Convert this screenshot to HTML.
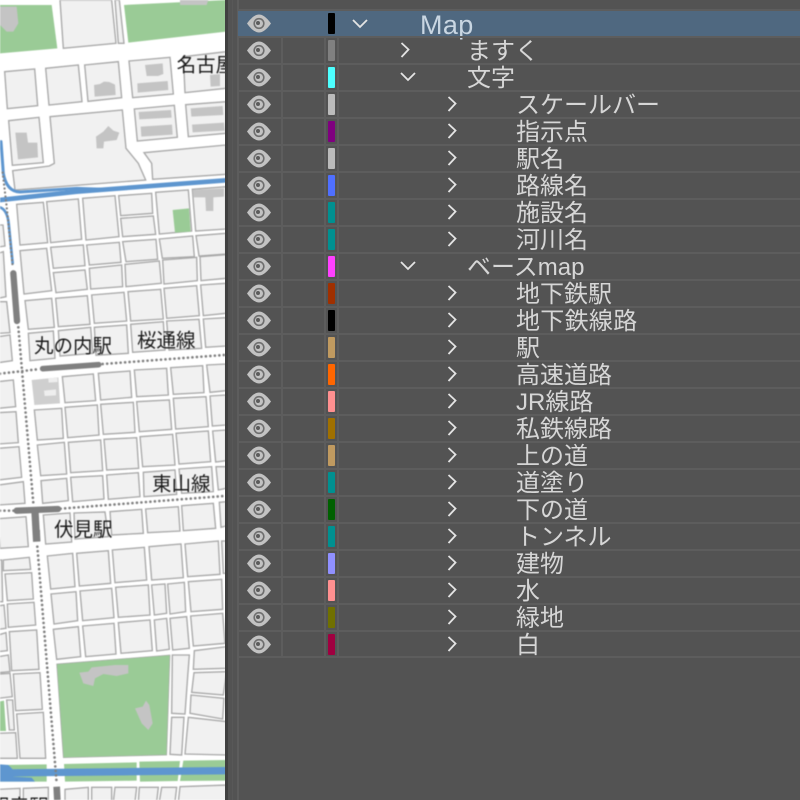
<!DOCTYPE html>
<html lang="ja"><head><meta charset="utf-8"><title>Map layers</title>
<style>
html,body{margin:0;padding:0;background:#535353}
body{width:800px;height:800px;position:relative;overflow:hidden;font-family:"Liberation Sans","Noto Sans CJK JP",sans-serif}
#map{position:absolute;left:0;top:0;width:226px;height:800px;overflow:hidden;background:#fff}
#map svg{position:absolute;left:0;top:0;filter:blur(.45px)}
#map .b polygon{fill:#f1f1f1;stroke:#a8a8a8;stroke-width:4}
#map text{font-family:"Liberation Sans","Noto Sans CJK JP",sans-serif;font-size:19.5px;fill:#1a1a1a}
#panel{position:absolute;left:226px;top:0;width:574px;height:800px;background:#535353}
.edge{position:absolute;left:-1px;top:0;width:3px;height:800px;background:#404040}
.v{position:absolute;background:#5d5d5d}
.h{position:absolute;left:11px;width:563px;height:2px;background:#5d5d5d}
.r{position:absolute;left:13px;width:561px;height:25px}
.r.s{left:12px;width:562px;background:#4f6880}
.r.s>*{margin-left:1px}
.e{position:absolute;left:8px;top:2px}
.c{position:absolute;left:89px;top:2px;width:7px;height:21px;border-radius:1px}
.t{position:absolute;top:-2px;font-size:24px;line-height:32px;color:#d6d6d6;white-space:nowrap}
.a{position:absolute;top:0}
</style></head><body>
<div id="map">
<svg width="226" height="800" viewBox="0 0 226 800">
<g transform="scale(.33333)">
<polygon points="0,15 155,15 172,145 0,160" fill="#9acb96"/>
<polygon points="372,15 678,0 678,95 385,128" fill="#9acb96"/>
<polygon points="0,20 50,20 55,70 40,95 20,95 0,75" fill="#c4c4c4"/>
<polygon points="540,0 625,0 620,15 540,15" fill="#c4c4c4"/>
<g class="b">
<polygon points="180,0 335,0 348,130 190,145"/>
<polygon points="345,0 358,0 372,130 355,130"/>
<polygon points="14,215 104,207 113,317 22,326"/>
<polygon points="137,205 235,195 246,305 147,315"/>
<polygon points="254,195 355,185 365,293 264,304"/>
<polygon points="387,183 510,172 520,282 398,293"/>
<polygon points="550,170 678,155 678,265 555,278"/>
<polygon points="26,362 117,352 130,488 37,496"/>
<polygon points="150,350 367,330 378,445 415,490 437,540 45,570 38,512 148,498 163,490"/>
<polygon points="403,327 523,316 532,412 412,423"/>
<polygon points="557,314 678,305 678,400 565,410"/>
<polygon points="432,458 678,435 678,523 458,538 455,490"/>
<polygon points="50,613 130,607 143,728 60,735"/>
<polygon points="140,605 235,597 245,718 152,728"/>
<polygon points="248,595 345,587 357,710 258,720"/>
<polygon points="356,587 455,580 458,640 362,647"/>
<polygon points="362,655 460,648 467,703 368,710"/>
<polygon points="467,577 565,570 575,693 478,702"/>
<polygon points="577,568 678,560 678,687 587,693"/>
<polygon points="-5,675 9,675 15,738 -5,741"/>
<polygon points="60,752 140,745 155,872 72,882"/>
<polygon points="152,742 250,735 255,797 160,805"/>
<polygon points="260,735 358,727 363,787 268,795"/>
<polygon points="368,725 468,718 473,778 378,785"/>
<polygon points="478,717 578,708 583,770 487,775"/>
<polygon points="588,707 678,700 678,762 597,768"/>
</g>
<polygon points="46,398 80,398 84,428 112,428 114,472 54,478" fill="#c4c4c4"/>
<polygon points="282,255 300,252 312,245 328,246 345,254 347,285 284,290" fill="#c4c4c4"/>
<polygon points="435,195 488,190 490,222 474,228 440,228" fill="#c4c4c4"/>
<polygon points="412,250 503,243 505,270 413,278" fill="#c4c4c4"/>
<polygon points="630,225 660,222 660,258 632,260" fill="#c4c4c4"/>
<polygon points="416,336 513,330 515,353 418,358" fill="#c4c4c4"/>
<polygon points="422,380 516,374 518,404 424,410" fill="#c4c4c4"/>
<polygon points="572,325 668,318 670,345 574,350" fill="#c4c4c4"/>
<polygon points="576,374 672,368 674,392 578,397" fill="#c4c4c4"/>
<polygon points="288,410 310,395 325,378 340,392 358,398 350,420 312,425 310,445 290,445" fill="#c4c4c4"/>
<polygon points="578,570 672,565 672,590 640,592 640,633 618,633 616,592 580,592" fill="#c4c4c4"/>
<polygon points="518,630 567,625 572,695 525,698" fill="#9acb96"/>
<g fill="none" stroke="#5e96cf" stroke-linecap="round">
<path d="M0 600 L230 575 L678 541" stroke-width="14"/>
<path d="M3 425 L10 520 Q20 575 60 576 L230 565 L320 568" stroke-width="9"/>
<path d="M0 622 Q22 630 26 670 L38 790" stroke-width="8"/>
</g>
<path d="M8 518 L20 620 L38 800" fill="none" stroke="#808080" stroke-width="7" stroke-dasharray="0 12" stroke-linecap="round"/>
<text transform="translate(530 215) scale(3)" style="letter-spacing:0">名古屋</text>
</g>
<g transform="translate(0 270) scale(.33333)">
<g class="b">
<polygon points="160,8 255,0 262,58 168,68"/>
<polygon points="268,-5 365,-15 368,50 272,57"/>
<polygon points="375,-17 478,-27 484,40 378,50"/>
<polygon points="488,-30 590,-38 592,32 492,42"/>
<polygon points="600,-40 678,-46 678,25 603,32"/>
<polygon points="-5,-50 10,-55 18,80 -5,85"/>
<polygon points="75,92 155,85 163,172 85,178"/>
<polygon points="167,85 262,77 270,163 175,170"/>
<polygon points="275,75 372,67 380,153 283,160"/>
<polygon points="384,65 482,58 490,147 392,153"/>
<polygon points="492,55 590,47 598,137 500,145"/>
<polygon points="602,45 678,40 678,130 610,137"/>
<polygon points="85,190 160,183 165,265 90,272"/>
<polygon points="175,182 272,172 278,250 180,258"/>
<polygon points="283,172 380,165 385,250 288,256"/>
<polygon points="392,163 490,155 495,240 398,247"/>
<polygon points="500,153 597,148 605,235 507,240"/>
<polygon points="610,147 678,143 678,228 617,232"/>
<polygon points="-5,95 20,95 30,188 -5,190"/>
<polygon points="-5,200 30,195 37,272 -5,278"/>
<polygon points="-5,335 40,330 47,410 -5,415"/>
<polygon points="-5,428 48,425 55,518 -5,522"/>
<polygon points="-5,535 57,530 65,622 -5,630"/>
<polygon points="-5,645 70,635 75,700 -5,705"/>
<polygon points="187,320 280,312 287,392 195,398"/>
<polygon points="295,310 390,303 395,382 302,390"/>
<polygon points="403,300 500,295 505,375 410,380"/>
<polygon points="512,293 608,287 612,368 520,373"/>
<polygon points="620,285 678,282 678,362 630,367"/>
<polygon points="103,420 185,415 190,505 112,510"/>
<polygon points="195,412 292,405 297,495 203,503"/>
<polygon points="302,403 400,397 405,487 310,493"/>
<polygon points="410,395 508,390 515,478 418,485"/>
<polygon points="520,385 618,380 625,470 527,477"/>
<polygon points="630,378 678,375 678,465 637,468"/>
<polygon points="112,525 193,517 200,612 122,617"/>
<polygon points="205,517 302,510 308,602 212,608"/>
<polygon points="312,508 410,503 416,595 320,600"/>
<polygon points="420,500 518,493 525,585 428,590"/>
<polygon points="528,490 625,483 632,575 537,582"/>
<polygon points="638,483 678,480 678,572 647,576"/>
<polygon points="123,632 200,625 205,692 128,700"/>
<polygon points="212,622 308,617 312,687 218,695"/>
<polygon points="320,615 415,608 420,680 325,688"/>
<polygon points="430,607 525,600 530,673 432,680"/>
<polygon points="537,597 635,590 640,665 545,670"/>
<polygon points="648,590 678,590 678,655 655,660"/>
<polygon points="-5,746 78,740 85,830 0,835"/>
<polygon points="130,735 210,729 215,816 137,822"/>
<polygon points="222,729 315,726 325,800 225,807"/>
<polygon points="330,725 425,718 430,790 335,795"/>
<polygon points="437,717 535,710 540,783 443,788"/>
<polygon points="545,707 640,700 647,775 550,782"/>
<polygon points="658,697 678,695 678,768 663,772"/>
</g>
<polygon points="95,330 175,322 180,400 103,405" fill="#cfcfcf"/>
<polygon points="132,362 168,358 168,376 134,378" fill="#eee"/>
<polygon points="145,325 172,323 173,336 146,338" fill="#eee"/>
<g fill="none" stroke="#808080" stroke-width="8" stroke-dasharray="0 13.5" stroke-linecap="round">
<path d="M55 172 L100 700"/>
<path d="M0 311 L120 297"/>
<path d="M308 282 L672 255"/>
<path d="M0 722 L42 722"/>
<path d="M182 716 L672 678"/>
</g>
<g fill="none" stroke="#808080" stroke-linecap="round">
<path d="M128 296 L296 284" stroke-width="17"/>
<path d="M40 10 L51 153" stroke-width="19"/>
<path d="M50 722 L174 717" stroke-width="19"/>
<path d="M105 725 L110 815" stroke-width="22" stroke-linecap="butt"/>
</g>
<text transform="translate(102 248) scale(3)">丸の内駅</text>
<text transform="translate(411 231) scale(3)">桜通線</text>
<text transform="translate(456 662) scale(3)">東山線</text>
</g>
<g transform="translate(0 530) scale(.33333)">
<g class="b">
<polygon points="142,78 218,70 225,170 152,177"/>
<polygon points="230,70 325,62 332,160 238,168"/>
<polygon points="337,60 433,52 440,150 345,158"/>
<polygon points="447,50 543,42 550,143 455,150"/>
<polygon points="555,42 655,33 660,133 563,140"/>
<polygon points="665,33 680,33 680,130 670,130"/>
<polygon points="153,192 228,185 233,272 162,282"/>
<polygon points="240,183 335,175 342,263 248,272"/>
<polygon points="347,172 445,165 450,255 355,262"/>
<polygon points="455,165 495,162 500,250 463,255"/>
<polygon points="503,162 553,157 557,245 510,252"/>
<polygon points="565,155 665,148 668,238 573,245"/>
<polygon points="160,298 235,290 242,380 170,388"/>
<polygon points="248,288 342,280 348,372 257,380"/>
<polygon points="355,278 450,270 457,362 363,370"/>
<polygon points="463,270 500,265 508,358 470,363"/>
<polygon points="510,265 560,260 568,355 518,360"/>
<polygon points="572,258 668,250 675,340 580,348"/>
<polygon points="517,375 568,375 563,440 555,552 515,550"/>
<polygon points="515,562 552,562 545,675 510,673"/>
<polygon points="583,362 680,350 680,415 580,418"/>
<polygon points="582,428 680,425 670,495 575,487"/>
<polygon points="573,495 672,505 668,567 570,550"/>
<polygon points="565,562 680,575 680,675 555,672"/>
<polygon points="10,90 88,82 92,118 10,122"/>
<polygon points="15,132 95,128 100,207 22,212"/>
<polygon points="22,222 102,217 107,285 25,292"/>
<polygon points="28,305 110,300 117,418 35,422"/>
<polygon points="40,432 120,428 127,538 47,542"/>
<polygon points="50,552 130,547 137,685 60,685"/>
<polygon points="-5,610 47,608 52,685 -5,685"/>
<polygon points="20,510 38,510 43,600 28,600"/>
<polygon points="-5,380 25,375 30,425 -5,428"/>
<polygon points="-5,432 30,430 37,500 -5,505"/>
<polygon points="-5,315 18,308 22,362 -5,365"/>
<polygon points="-5,90 5,90 8,215 -5,215"/>
<polygon points="-5,228 12,225 18,295 -5,298"/>
<polygon points="195,778 265,772 265,815 195,815"/>
<polygon points="275,772 335,772 335,815 275,815"/>
<polygon points="345,772 410,772 405,815 340,815"/>
<polygon points="418,772 475,772 470,815 415,815"/>
<polygon points="485,772 530,772 525,815 478,815"/>
<polygon points="540,770 680,765 680,815 535,815"/>
<polygon points="-5,778 60,775 60,815 -5,815"/>
<polygon points="70,775 145,772 145,815 70,815"/>
</g>
<polygon points="-5,515 12,512 18,603 -5,603" fill="#9acb96"/>
<polygon points="170,402 510,375 500,675 190,683" fill="#9acb96" stroke="#a8a8a8" stroke-width="2"/>
<polygon points="238,428 265,425 275,412 345,405 385,405 385,430 350,438 310,432 285,445 280,468 250,460" fill="#c4c4c4"/>
<polygon points="405,535 428,530 438,512 448,525 458,580 445,600 425,580" fill="#c4c4c4"/>
<g fill="#9acb96">
<polygon points="0,705 140,703 140,755 0,755"/>
<polygon points="192,702 410,697 410,752 195,755"/>
<polygon points="418,695 540,693 533,753 420,755"/>
<polygon points="550,692 678,690 678,752 540,753"/>
</g>
<path d="M0 729 L678 722" stroke="#5e96cf" stroke-width="22" fill="none"/>
<polygon points="0,703 25,705 40,720 40,740 95,743 105,755 0,755" fill="#5e96cf"/>
<g fill="none" stroke="#808080" stroke-width="8" stroke-dasharray="0 13.5" stroke-linecap="round">
<path d="M112 50 L170 760"/>
</g>
<path d="M110 0 L111 34" stroke="#808080" stroke-width="20" fill="none"/>
<path d="M170 770 L172 810" stroke="#808080" stroke-width="20" fill="none"/>
</g>
<text x="54" y="536">伏見駅</text>
<text x="-10" y="813">観音駅</text>
</svg>
</div>
<div id="panel">
<div class="edge"></div>
<svg width="0" height="0" style="position:absolute"><defs>
<g id="eye"><path d="M0 10.5 C5 3.5 9 1.5 12 1.5 C15 1.5 19 3.5 24 10.5 C19 17.5 15 19.5 12 19.5 C9 19.5 5 17.5 0 10.5Z" fill="#c2c2c2"/><circle cx="12" cy="10.5" r="5.6" fill="#6e6e6e"/><circle cx="12" cy="10.5" r="4" fill="#c2c2c2"/><circle cx="11" cy="10" r="2" fill="#5c5c5c"/></g>
</defs></svg>
<div class="v" style="left:6px;top:0;width:1px;height:800px;background:#585858"></div>
<div class="v" style="left:11px;top:0;width:2px;height:800px"></div>
<div class="v" style="left:55px;top:9px;width:2px;height:649px"></div>
<div class="v" style="left:98px;top:9px;width:2px;height:649px"></div>
<div class="v" style="left:111px;top:9px;width:2px;height:649px"></div>
<div class="h" style="top:9px"></div>

<div class="r s" style="top:11px"><svg class="e" width="24" height="21"><use href="#eye"/></svg><div class="c" style="background:#000"></div><svg class="a" style="left:113px;top:8px" width="18" height="10"><path d="M1 1 L8 8 L15 1" fill="none" stroke="#e4e4e4" stroke-width="1.8"/></svg><div class="t" style="left:181px;font-size:27px;letter-spacing:.4px;color:#c9d6e2">Map</div></div>
<div class="h" style="top:36px"></div>
<div class="r" style="top:38px"><svg class="e" width="24" height="21"><use href="#eye"/></svg><div class="c" style="background:#808080"></div><svg class="a" style="left:161px;top:4px" width="11" height="17"><path d="M1.5 1 L8.5 7.5 L1.5 15" fill="none" stroke="#e4e4e4" stroke-width="1.8"/></svg><div class="t" style="left:228px">ますく</div></div>
<div class="h" style="top:63px"></div>
<div class="r" style="top:65px"><svg class="e" width="24" height="21"><use href="#eye"/></svg><div class="c" style="background:#4dffff"></div><svg class="a" style="left:161px;top:7px" width="18" height="10"><path d="M1 1 L8 8 L15 1" fill="none" stroke="#e4e4e4" stroke-width="1.8"/></svg><div class="t" style="left:228px">文字</div></div>
<div class="h" style="top:90px"></div>
<div class="r" style="top:92px"><svg class="e" width="24" height="21"><use href="#eye"/></svg><div class="c" style="background:#bbb"></div><svg class="a" style="left:208px;top:4px" width="11" height="17"><path d="M1.5 1 L8.5 7.5 L1.5 15" fill="none" stroke="#e4e4e4" stroke-width="1.8"/></svg><div class="t" style="left:277px">スケールバー</div></div>
<div class="h" style="top:117px"></div>
<div class="r" style="top:119px"><svg class="e" width="24" height="21"><use href="#eye"/></svg><div class="c" style="background:#7f007f"></div><svg class="a" style="left:208px;top:4px" width="11" height="17"><path d="M1.5 1 L8.5 7.5 L1.5 15" fill="none" stroke="#e4e4e4" stroke-width="1.8"/></svg><div class="t" style="left:277px">指示点</div></div>
<div class="h" style="top:144px"></div>
<div class="r" style="top:146px"><svg class="e" width="24" height="21"><use href="#eye"/></svg><div class="c" style="background:#bbb"></div><svg class="a" style="left:208px;top:4px" width="11" height="17"><path d="M1.5 1 L8.5 7.5 L1.5 15" fill="none" stroke="#e4e4e4" stroke-width="1.8"/></svg><div class="t" style="left:277px">駅名</div></div>
<div class="h" style="top:171px"></div>
<div class="r" style="top:173px"><svg class="e" width="24" height="21"><use href="#eye"/></svg><div class="c" style="background:#4f6fff"></div><svg class="a" style="left:208px;top:4px" width="11" height="17"><path d="M1.5 1 L8.5 7.5 L1.5 15" fill="none" stroke="#e4e4e4" stroke-width="1.8"/></svg><div class="t" style="left:277px">路線名</div></div>
<div class="h" style="top:198px"></div>
<div class="r" style="top:200px"><svg class="e" width="24" height="21"><use href="#eye"/></svg><div class="c" style="background:#009090"></div><svg class="a" style="left:208px;top:4px" width="11" height="17"><path d="M1.5 1 L8.5 7.5 L1.5 15" fill="none" stroke="#e4e4e4" stroke-width="1.8"/></svg><div class="t" style="left:277px">施設名</div></div>
<div class="h" style="top:225px"></div>
<div class="r" style="top:227px"><svg class="e" width="24" height="21"><use href="#eye"/></svg><div class="c" style="background:#009090"></div><svg class="a" style="left:208px;top:4px" width="11" height="17"><path d="M1.5 1 L8.5 7.5 L1.5 15" fill="none" stroke="#e4e4e4" stroke-width="1.8"/></svg><div class="t" style="left:277px">河川名</div></div>
<div class="h" style="top:252px"></div>
<div class="r" style="top:254px"><svg class="e" width="24" height="21"><use href="#eye"/></svg><div class="c" style="background:#ff40ff"></div><svg class="a" style="left:161px;top:7px" width="18" height="10"><path d="M1 1 L8 8 L15 1" fill="none" stroke="#e4e4e4" stroke-width="1.8"/></svg><div class="t" style="left:228px">ベースmap</div></div>
<div class="h" style="top:279px"></div>
<div class="r" style="top:281px"><svg class="e" width="24" height="21"><use href="#eye"/></svg><div class="c" style="background:#a03000"></div><svg class="a" style="left:208px;top:4px" width="11" height="17"><path d="M1.5 1 L8.5 7.5 L1.5 15" fill="none" stroke="#e4e4e4" stroke-width="1.8"/></svg><div class="t" style="left:277px">地下鉄駅</div></div>
<div class="h" style="top:306px"></div>
<div class="r" style="top:308px"><svg class="e" width="24" height="21"><use href="#eye"/></svg><div class="c" style="background:#000"></div><svg class="a" style="left:208px;top:4px" width="11" height="17"><path d="M1.5 1 L8.5 7.5 L1.5 15" fill="none" stroke="#e4e4e4" stroke-width="1.8"/></svg><div class="t" style="left:277px;letter-spacing:.3px">地下鉄線路</div></div>
<div class="h" style="top:333px"></div>
<div class="r" style="top:335px"><svg class="e" width="24" height="21"><use href="#eye"/></svg><div class="c" style="background:#c09a60"></div><svg class="a" style="left:208px;top:4px" width="11" height="17"><path d="M1.5 1 L8.5 7.5 L1.5 15" fill="none" stroke="#e4e4e4" stroke-width="1.8"/></svg><div class="t" style="left:277px">駅</div></div>
<div class="h" style="top:360px"></div>
<div class="r" style="top:362px"><svg class="e" width="24" height="21"><use href="#eye"/></svg><div class="c" style="background:#ff6600"></div><svg class="a" style="left:208px;top:4px" width="11" height="17"><path d="M1.5 1 L8.5 7.5 L1.5 15" fill="none" stroke="#e4e4e4" stroke-width="1.8"/></svg><div class="t" style="left:277px">高速道路</div></div>
<div class="h" style="top:387px"></div>
<div class="r" style="top:389px"><svg class="e" width="24" height="21"><use href="#eye"/></svg><div class="c" style="background:#ff9090"></div><svg class="a" style="left:208px;top:4px" width="11" height="17"><path d="M1.5 1 L8.5 7.5 L1.5 15" fill="none" stroke="#e4e4e4" stroke-width="1.8"/></svg><div class="t" style="left:277px">JR線路</div></div>
<div class="h" style="top:414px"></div>
<div class="r" style="top:416px"><svg class="e" width="24" height="21"><use href="#eye"/></svg><div class="c" style="background:#a07000"></div><svg class="a" style="left:208px;top:4px" width="11" height="17"><path d="M1.5 1 L8.5 7.5 L1.5 15" fill="none" stroke="#e4e4e4" stroke-width="1.8"/></svg><div class="t" style="left:277px">私鉄線路</div></div>
<div class="h" style="top:441px"></div>
<div class="r" style="top:443px"><svg class="e" width="24" height="21"><use href="#eye"/></svg><div class="c" style="background:#c09a60"></div><svg class="a" style="left:208px;top:4px" width="11" height="17"><path d="M1.5 1 L8.5 7.5 L1.5 15" fill="none" stroke="#e4e4e4" stroke-width="1.8"/></svg><div class="t" style="left:277px">上の道</div></div>
<div class="h" style="top:468px"></div>
<div class="r" style="top:470px"><svg class="e" width="24" height="21"><use href="#eye"/></svg><div class="c" style="background:#009090"></div><svg class="a" style="left:208px;top:4px" width="11" height="17"><path d="M1.5 1 L8.5 7.5 L1.5 15" fill="none" stroke="#e4e4e4" stroke-width="1.8"/></svg><div class="t" style="left:277px">道塗り</div></div>
<div class="h" style="top:495px"></div>
<div class="r" style="top:497px"><svg class="e" width="24" height="21"><use href="#eye"/></svg><div class="c" style="background:#006000"></div><svg class="a" style="left:208px;top:4px" width="11" height="17"><path d="M1.5 1 L8.5 7.5 L1.5 15" fill="none" stroke="#e4e4e4" stroke-width="1.8"/></svg><div class="t" style="left:277px">下の道</div></div>
<div class="h" style="top:522px"></div>
<div class="r" style="top:524px"><svg class="e" width="24" height="21"><use href="#eye"/></svg><div class="c" style="background:#009090"></div><svg class="a" style="left:208px;top:4px" width="11" height="17"><path d="M1.5 1 L8.5 7.5 L1.5 15" fill="none" stroke="#e4e4e4" stroke-width="1.8"/></svg><div class="t" style="left:277px">トンネル</div></div>
<div class="h" style="top:549px"></div>
<div class="r" style="top:551px"><svg class="e" width="24" height="21"><use href="#eye"/></svg><div class="c" style="background:#9090ff"></div><svg class="a" style="left:208px;top:4px" width="11" height="17"><path d="M1.5 1 L8.5 7.5 L1.5 15" fill="none" stroke="#e4e4e4" stroke-width="1.8"/></svg><div class="t" style="left:277px">建物</div></div>
<div class="h" style="top:576px"></div>
<div class="r" style="top:578px"><svg class="e" width="24" height="21"><use href="#eye"/></svg><div class="c" style="background:#ff9090"></div><svg class="a" style="left:208px;top:4px" width="11" height="17"><path d="M1.5 1 L8.5 7.5 L1.5 15" fill="none" stroke="#e4e4e4" stroke-width="1.8"/></svg><div class="t" style="left:277px">水</div></div>
<div class="h" style="top:603px"></div>
<div class="r" style="top:605px"><svg class="e" width="24" height="21"><use href="#eye"/></svg><div class="c" style="background:#707000"></div><svg class="a" style="left:208px;top:4px" width="11" height="17"><path d="M1.5 1 L8.5 7.5 L1.5 15" fill="none" stroke="#e4e4e4" stroke-width="1.8"/></svg><div class="t" style="left:277px">緑地</div></div>
<div class="h" style="top:630px"></div>
<div class="r" style="top:632px"><svg class="e" width="24" height="21"><use href="#eye"/></svg><div class="c" style="background:#a00040"></div><svg class="a" style="left:208px;top:4px" width="11" height="17"><path d="M1.5 1 L8.5 7.5 L1.5 15" fill="none" stroke="#e4e4e4" stroke-width="1.8"/></svg><div class="t" style="left:277px">白</div></div>
<div class="h" style="top:656px"></div>
</div>
</body></html>
